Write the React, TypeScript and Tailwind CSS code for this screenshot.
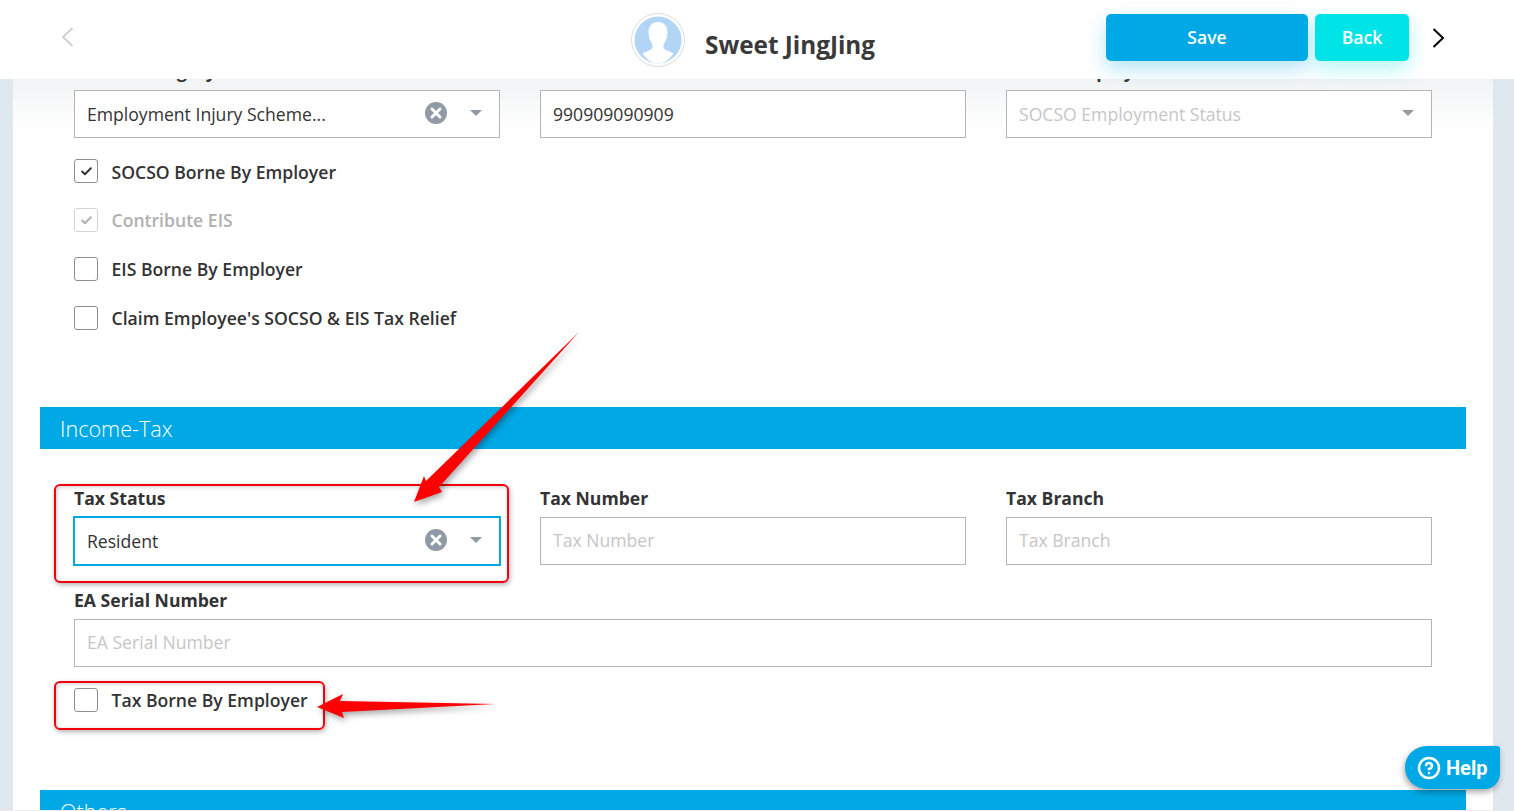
import React from "react";
import { CircleHelp, Check } from "lucide-react";

function ClearIcon() {
  return (
    <svg width="22" height="22" viewBox="0 0 22 22" className="-mt-[2px] shrink-0">
      <circle cx="11" cy="11" r="11" fill="#8f9aa5" />
      <path d="M7 7l8 8M15 7l-8 8" stroke="#fff" strokeWidth="3" strokeLinecap="round" />
    </svg>
  );
}

function Caret() {
  return <div className="h-0 w-0 border-x-[6px] border-t-[6px] border-x-transparent border-t-[#8f9aa5]" />;
}

function SelectBox({ text, placeholder, clear, focus }: { text: string; placeholder?: boolean; clear?: boolean; focus?: boolean }) {
  return (
    <div
      className={`flex items-center bg-white pl-[12px] pr-[17px] ${focus ? "-m-px h-[50px] border-2 border-[#00a9e6]" : "h-[48px] border border-[#b5b5b5]"}`}
    >
      <span className={`flex-1 truncate text-[17.6px] ${placeholder ? "text-[#c6c6c6]" : "text-[#333]"}`}>{text}</span>
      {clear && <ClearIcon />}
      <div className={clear ? "ml-[23px] -mt-0.5" : "-mt-0.5"}>
        <Caret />
      </div>
    </div>
  );
}

function TextBox({ text, placeholder }: { text: string; placeholder?: boolean }) {
  return (
    <div className="flex h-[48px] items-center border border-[#b5b5b5] bg-white pl-[12px]">
      <span className={`text-[17.6px] ${placeholder ? "-mt-px text-[#c6c6c6]" : "text-[#333]"}`}>{text}</span>
    </div>
  );
}

function Field({ label, children }: { label: string; children: React.ReactNode }) {
  return (
    <div>
      <div className="mb-[8px] h-[21px] text-[17.6px] font-bold leading-[21px] text-[#333]">{label}</div>
      {children}
    </div>
  );
}

function CheckRow({ label, checked, disabled, raised, className }: { label: string; checked?: boolean; disabled?: boolean; raised?: boolean; className?: string }) {
  return (
    <div className={`flex h-[24px] items-center ${className ?? ""}`}>
      <div
        className={`flex h-[24px] w-[24px] shrink-0 items-center justify-center rounded-[3px] border ${raised ? "-mt-[2px]" : ""} ${disabled ? "border-[#d4d4d4]" : "border-[#8e8e8e]"}`}
      >
        {checked && <Check size={13} strokeWidth={3.5} className={disabled ? "text-[#b0b0b0]" : "text-[#333]"} />}
      </div>
      <span className={`ml-[13.5px] text-[17.6px] font-semibold ${disabled ? "text-[#b0b0b0]" : "text-[#333]"}`}>{label}</span>
    </div>
  );
}

function SectionBar({ title }: { title: string }) {
  return (
    <div className="flex h-[42px] shrink-0 items-center bg-[#00a9e6] pl-[20px] pt-[2px] text-[21.6px] font-light text-white">{title}</div>
  );
}

export default function App() {
  return (
    <div
      className="relative flex h-[811px] w-[1514px] flex-col overflow-hidden bg-[#dfe7ef]"
      style={{ fontFamily: '"Open Sans", sans-serif' }}
    >
      <header className="relative z-10 flex h-[79px] shrink-0 items-center bg-white pl-[61px] pr-[69px]">
        <svg width="13" height="20" viewBox="0 0 13 20" className="-mt-[5px]">
          <path d="M11.500 1L2 10l9.500 9" fill="none" stroke="#cfcfcf" strokeWidth="1.800" />
        </svg>
        <div className="ml-[557px] flex items-center">
          <svg width="54" height="54" viewBox="0 0 54 54" className="mt-[1px]">
            <circle cx="27" cy="27" r="26.5" fill="#fff" stroke="#dcdcdc" />
            <circle cx="27" cy="27" r="23.5" fill="#b2d4f5" />
            <path
              d="M27 9c-6 0-9.500 4.500-9.500 10.500 0 4.500 1.500 8.500 3.500 11 .8 1.200.8 4-.5 5.500-2 2-6 2.500-9 4.500C16 47 21 50.500 27 50.500S38 47 42.500 40.500c-3-2-7-2.500-9-4.500-1.300-1.500-1.300-4.300-.5-5.500 2-2.500 3.500-6.500 3.500-11C36.500 13.500 33 9 27 9z"
              fill="#fff"
            />
          </svg>
          <div className="ml-[20px] mt-[12px] text-[24.3px] font-bold text-[#3a3a3a]">Sweet JingJing</div>
        </div>
        <div className="ml-auto flex items-center">
          <button className="-mt-[4px] h-[47px] w-[202px] rounded-[5px] bg-[#00a9e6] text-[17.6px] font-semibold text-white shadow-[0_8px_20px_rgba(0,169,230,0.3)]">
            Save
          </button>
          <button className="-mt-[4px] ml-[7px] h-[47px] w-[94px] rounded-[5px] bg-[#00e4e8] text-[17.6px] font-semibold text-white shadow-[0_8px_20px_rgba(0,228,232,0.3)]">
            Back
          </button>
          <svg width="13" height="20" viewBox="0 0 13 20" className="-mt-[4px] ml-[23px]">
            <path d="M1.500 1L11 10l-9.500 9" fill="none" stroke="#000" strokeWidth="2" />
          </svg>
        </div>
      </header>

      <main className="relative mx-[21px] ml-[13px] min-h-0 flex-1 overflow-hidden bg-white px-[27px]">
        <div className="pointer-events-none absolute inset-x-0 top-0 h-[50px] bg-gradient-to-b from-[#f1f3f4] to-transparent" />
        <div className="relative -mt-[18px] px-[34px]">
          <div className="grid grid-cols-3 gap-x-[40px]">
            <Field label="SOCSO Category">
              <SelectBox text="Employment Injury Scheme..." clear />
            </Field>
            <Field label="SOCSO Number">
              <TextBox text="990909090909" />
            </Field>
            <Field label="SOCSO Employment Status">
              <SelectBox text="SOCSO Employment Status" placeholder />
            </Field>
          </div>
          <CheckRow label="SOCSO Borne By Employer" checked raised className="mt-[22px]" />
          <CheckRow label="Contribute EIS" checked disabled className="mt-[24px]" />
          <CheckRow label="EIS Borne By Employer" className="mt-[25px]" />
          <CheckRow label="Claim Employee's SOCSO & EIS Tax Relief" className="mt-[25px]" />
        </div>
        <div className="relative mt-[77px]">
          <SectionBar title="Income-Tax" />
        </div>
        <div className="px-[34px] pt-[39px]">
          <div className="grid grid-cols-3 gap-x-[40px]">
            <Field label="Tax Status">
              <SelectBox text="Resident" clear focus />
            </Field>
            <Field label="Tax Number">
              <TextBox text="Tax Number" placeholder />
            </Field>
            <Field label="Tax Branch">
              <TextBox text="Tax Branch" placeholder />
            </Field>
          </div>
          <div className="mt-[25px]">
            <Field label="EA Serial Number">
              <div className="mt-[2px]">
                <TextBox text="EA Serial Number" placeholder />
              </div>
            </Field>
          </div>
          <CheckRow label="Tax Borne By Employer" className="mt-[21px]" />
        </div>
        <div className="mt-[78px]">
          <SectionBar title="Others" />
        </div>
      </main>
      <div className="h-px shrink-0 bg-[#ececec]" />

      {/* annotations laid over the screenshot */}
      <div className="absolute left-[54px] top-[484px] h-[99px] w-[455px] rounded-[6px] border-2 border-[#f2000f] shadow-[1px_2px_5px_rgba(0,0,0,0.3),inset_1px_1px_4px_rgba(0,0,0,0.2)]" />
      <div className="absolute left-[54px] top-[681px] h-[49px] w-[271px] rounded-[6px] border-2 border-[#f2000f] shadow-[1px_2px_5px_rgba(0,0,0,0.3),inset_1px_1px_4px_rgba(0,0,0,0.2)]" />
      <svg
        width="1514"
        height="811"
        viewBox="0 0 1514 811"
        className="pointer-events-none absolute left-0 top-0 drop-shadow-[2px_3px_3px_rgba(0,0,0,0.35)]"
      >
        <polygon points="579,332 439,487 442,492 414,502 424,476 426,481" fill="#ff0000" />
        <polygon points="495,704 340,701 343,694 317,707 344,718 342,712" fill="#ff0000" />
      </svg>

      <div className="absolute left-[1405px] top-[746px] flex h-[43px] w-[95px] items-center rounded-bl-[22px] rounded-br-[16px] rounded-tl-[22px] rounded-tr-[3px] bg-[#00a9e6] pl-[12px] text-white shadow-[-1px_3px_6px_rgba(0,0,0,0.35)]">
        <CircleHelp size={24} strokeWidth={2.5} />
        <span className="ml-[5px] text-[20px] font-bold" style={{ fontFamily: "Roboto, sans-serif" }}>
          Help
        </span>
      </div>
    </div>
  );
}
